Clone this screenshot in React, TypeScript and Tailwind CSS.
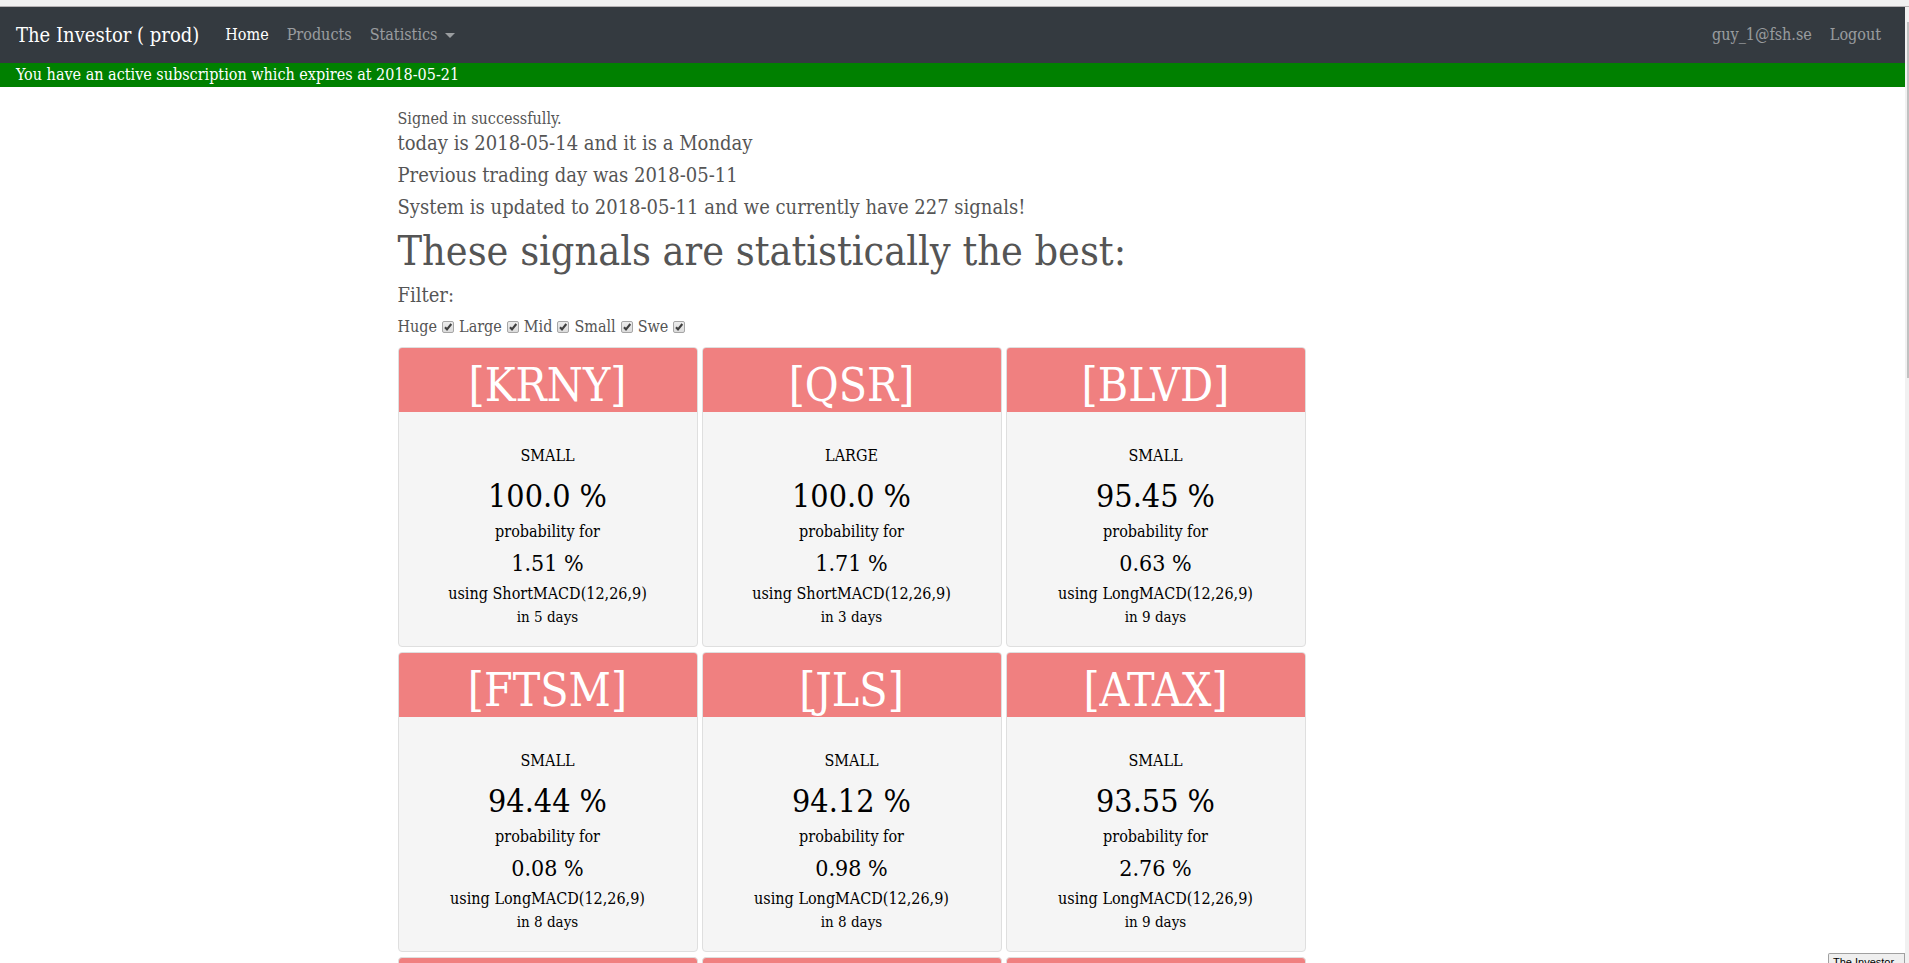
const signals = [
  { ticker: "KRNY", size: "SMALL", probability: "100.0", gain: "1.51", method: "ShortMACD(12,26,9)", days: 5 },
  { ticker: "QSR", size: "LARGE", probability: "100.0", gain: "1.71", method: "ShortMACD(12,26,9)", days: 3 },
  { ticker: "BLVD", size: "SMALL", probability: "95.45", gain: "0.63", method: "LongMACD(12,26,9)", days: 9 },
  { ticker: "FTSM", size: "SMALL", probability: "94.44", gain: "0.08", method: "LongMACD(12,26,9)", days: 8 },
  { ticker: "JLS", size: "SMALL", probability: "94.12", gain: "0.98", method: "LongMACD(12,26,9)", days: 8 },
  { ticker: "ATAX", size: "SMALL", probability: "93.55", gain: "2.76", method: "LongMACD(12,26,9)", days: 9 },
];

const filters = ["Huge", "Large", "Mid", "Small", "Swe"];

function Filter({ name }: { name: string }) {
  return (
    <label className="flex items-center gap-[5px]">
      {name}
      <span className="relative flex size-3">
        <input
          type="checkbox"
          defaultChecked
          className="peer size-3 appearance-none rounded-xs border border-[#a6a6a6] bg-linear-to-b from-[#ededed] to-[#dcdcdc]"
        />
        <svg viewBox="0 0 12 12" className="pointer-events-none absolute inset-0 hidden size-3 peer-checked:block" aria-hidden="true">
          <path d="M3 6.2 5 8.3 9.3 3" fill="none" stroke="#404040" strokeWidth="2.1" />
        </svg>
      </span>
    </label>
  );
}

function SignalCard({ signal }: { signal: (typeof signals)[number] }) {
  return (
    <article className="flex h-[300px] flex-col overflow-hidden rounded-sm border border-[#dfdfdf] bg-[#f5f5f5] text-center text-black">
      <h2 className="h-16 bg-[#f08080] pt-2 text-[46px] leading-[58px] text-white">[{signal.ticker}]</h2>
      <div className="pt-8">
        <p>{signal.size}</p>
        <p className="pt-1 text-[32px] leading-[48px]">{signal.probability} %</p>
        <p>probability for</p>
        <p className="text-[23px] leading-[38px]">{signal.gain} %</p>
        <p>using {signal.method}</p>
        <p className="text-[15px] leading-[22px]">in {signal.days} days</p>
      </div>
    </article>
  );
}

export default function App() {
  return (
    <div className="flex h-screen flex-col overflow-hidden bg-white font-['Roboto_Slab','DejaVu_Serif_Condensed','DejaVu_Serif',serif] text-base leading-6 text-[#555]">
      <div className="h-[7px] shrink-0 border-b border-[#b6b2b4] bg-[#f1f1f1]" />
      <div className="flex min-h-0 flex-1">
        <div className="relative min-w-0 flex-1 overflow-hidden">
          <nav className="flex h-14 items-center bg-[#343a40] px-4 text-white/50">
            <a href="#" className="mr-[26px] text-xl text-white">The Investor ( prod)</a>
            <div className="flex flex-1 items-center gap-[18px]">
              <a href="#" className="text-white">Home</a>
              <a href="#">Products</a>
              <button type="button" className="flex items-center gap-2">
                Statistics
                <svg viewBox="0 0 10 5" className="h-[5px] w-2.5" fill="currentColor" aria-hidden="true">
                  <path d="M0 0h10L5 5z" />
                </svg>
              </button>
            </div>
            <div className="flex gap-[18px] pr-2">
              <a href="#">guy_1@fsh.se</a>
              <a href="#">Logout</a>
            </div>
          </nav>
          <p className="bg-[#008000] px-4 text-white">You have an active subscription which expires at 2018-05-21</p>

          <main className="mx-auto max-w-[1140px] px-[15px] pt-5">
            <p>Signed in successfully.</p>
            <div className="flex flex-col gap-2 text-xl leading-6">
              <h5>today is 2018-05-14 and it is a Monday</h5>
              <h5>Previous trading day was 2018-05-11</h5>
              <h5>System is updated to 2018-05-11 and we currently have 227 signals!</h5>
              <h1 className="text-[41px] leading-[48px]">These signals are statistically the best:</h1>
              <h5>Filter:</h5>
            </div>
            <div className="flex gap-[5px] py-2">
              {filters.map((name) => (
                <Filter key={name} name={name} />
              ))}
            </div>
            <section className="grid grid-cols-[repeat(auto-fill,300px)] gap-x-1 gap-y-[5px] pr-[180px]">
              {signals.map((signal) => (
                <SignalCard key={signal.ticker} signal={signal} />
              ))}
              {[0, 1, 2].map((index) => (
                <div key={index} className="h-[300px] rounded-sm border border-[#dfdfdf] bg-[#f08080]" />
              ))}
            </section>
          </main>
          <div className="absolute right-0 bottom-0 h-2.5 w-[77px] overflow-hidden rounded-tl-xs border border-b-0 border-[#a0a0a0] bg-[#efefef] pl-1 font-['Liberation_Sans',sans-serif] text-[11px] leading-4 text-black">
            The Investor
          </div>
        </div>
        <div className="w-1 shrink-0 bg-[#f1f1f1] pt-[15px] pl-0.5">
          <div className="h-[356px] bg-[#c1c1c1]" />
        </div>
      </div>
    </div>
  );
}
